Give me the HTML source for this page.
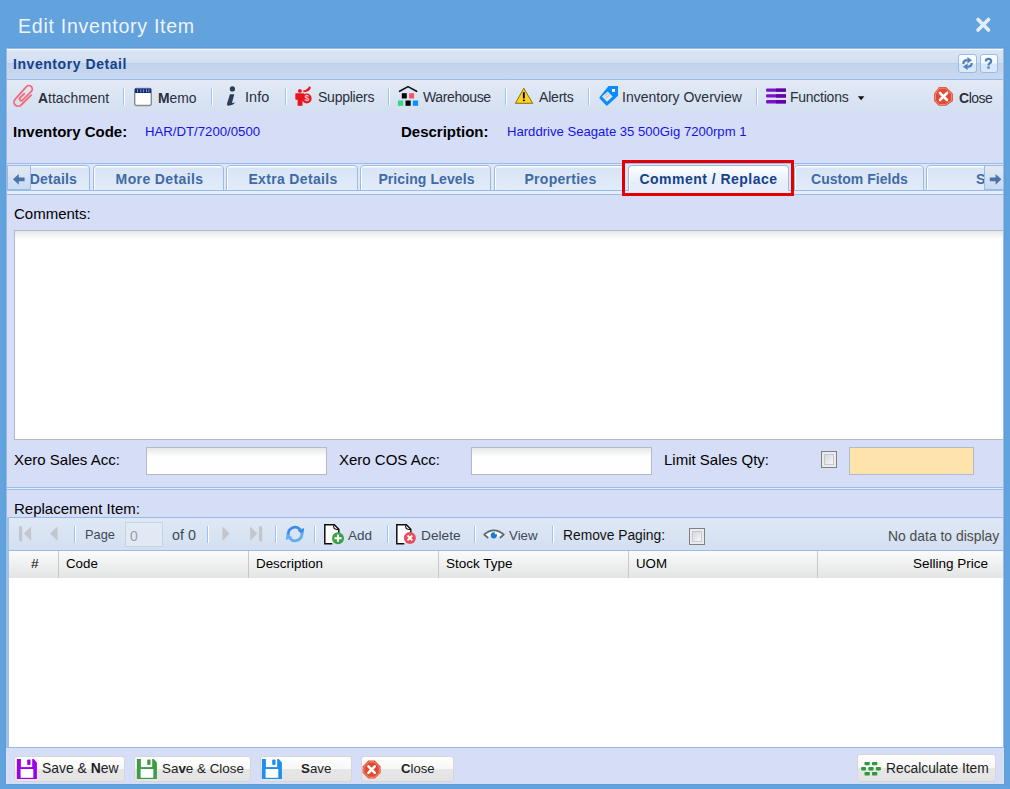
<!DOCTYPE html>
<html><head><meta charset="utf-8">
<style>
*{box-sizing:border-box;margin:0;padding:0}
html,body{width:1010px;height:789px;overflow:hidden;background:#62a2dd;font-family:"Liberation Sans",sans-serif;}
.a{position:absolute}
.t{position:absolute;white-space:nowrap;line-height:1}
#panel{position:absolute;left:6px;top:48px;width:998px;height:736px;background:#d6ddf6;border-left:1px solid #99bbe8;border-top:1px solid #99bbe8}

.tab{position:absolute;top:0;width:131px;height:26px;border:1px solid #99bbe8;border-radius:4px 4px 0 0;background:linear-gradient(#ffffff 0,#ffffff 1px,#d8e5f6 2px,#e2ecfa 25px);color:#416aa3;font-weight:bold;text-align:center;overflow:hidden;box-shadow:inset 1px 0 0 #fff}
.tab span{display:inline-block;line-height:1;margin-top:6px;white-space:nowrap}
.tab.act{color:#15428b;background:linear-gradient(#ffffff 0,#f7fafe 5px,#e4edf9 18px,#e6eefb 26px);height:26px;border-bottom:none}

.btn{position:absolute;top:756px;height:26px;border:1px solid #d6d6d6;border-radius:3px;background:linear-gradient(#fefefe 0,#f8f8f8 48%,#e6e6e6 52%,#e4e4e4 100%)}
.sep{position:absolute;width:2px;height:17px;border-left:1px solid #9ec3f3;background:#fff}
</style></head><body>
<!-- title -->
<div class="t" style="left:18px;top:17px;font-size:19.6px;letter-spacing:0.71px;color:#eef4fb">Edit Inventory Item</div>
<svg class="a" style="left:970px;top:12px" width="26" height="26"><path d="M8 7.5 L18.5 18 M18.5 7.5 L8 18" stroke="#e3eef8" stroke-width="3.6" stroke-linecap="round"/></svg>

<div class="a" style="left:5px;top:47px;width:1000px;height:738px;border:1px solid #5a9edb"></div>
<div id="panel"></div>
<div class="a" style="left:1003px;top:48px;width:1px;height:700px;background:#9dbde9"></div>
<div class="a" style="left:6px;top:748px;width:1px;height:36px;background:#dde1f7"></div>
<!-- panel header -->
<div class="a" style="left:7px;top:49px;width:996px;height:30px;background:linear-gradient(#dbe6f4 0,#d3dff1 13px,#b9ceeb 13px,#b9ceeb 14px,#c1d3ed 14px,#c8d8ef 29px);border-top:1px solid #f6f9fd"></div>
<div class="a" style="left:7px;top:79px;width:996px;height:1px;background:#99bbe8"></div>
<div class="t" style="left:13px;top:57px;font-size:14px;letter-spacing:0.56px;font-weight:bold;color:#15428b">Inventory Detail</div>


<div class="a" style="left:958px;top:54px;width:19px;height:19px;border:1px solid #99bbe8;border-radius:3px;background:linear-gradient(#fbfdff 0,#f3f8fe 8px,#d6e6f9 9px,#dceaf9 19px)"></div>
<svg class="a" style="left:958px;top:54px" width="19" height="19"><g fill="#4f80bb"><path d="M5.3 10 Q5.3 6.2 9.6 6.2" fill="none" stroke="#4f80bb" stroke-width="2.2"/><path d="M9.4 3 L14 6.2 L9.4 9.4 Z"/><path d="M13.7 9 Q13.7 12.8 9.4 12.8" fill="none" stroke="#4f80bb" stroke-width="2.2"/><path d="M9.6 9.6 L5 12.8 L9.6 16 Z"/></g></svg>
<div class="a" style="left:980px;top:54px;width:18px;height:19px;border:1px solid #99bbe8;border-radius:3px;background:linear-gradient(#fbfdff 0,#f3f8fe 8px,#d6e6f9 9px,#dceaf9 19px)"></div>
<svg class="a" style="left:980px;top:54px" width="18" height="19"><path d="M5.9 7.4 Q5.9 4.9 8.5 4.9 Q11.1 4.9 11.1 7.3 Q11.1 8.7 9.4 9.6 Q8.5 10.2 8.5 11.4" fill="none" stroke="#4f80bb" stroke-width="2.3"/><rect x="7.3" y="12.5" width="2.4" height="2.2" fill="#4f80bb"/></svg>

<!-- toolbar -->
<div class="a" style="left:7px;top:80px;width:996px;height:33px;background:linear-gradient(#e3eaf6,#d3dff1)"></div>


<!-- toolbar items -->
<div class="a" style="left:7px;top:80px;width:996px;height:34px;">
</div>
<svg class="a" style="left:10px;top:84px" width="26" height="26"><g transform="translate(0.8,-1) rotate(-45)" fill="none" stroke="#f26b78" stroke-width="1.8" stroke-linecap="round"><path d="M5.8 22.9 L-8.2 22.9 A4.2 4.2 0 0 1 -8.2 14.5 L8.5 13.6 A3.45 3.45 0 0 1 8.5 20.5 L-3.8 20.5 A1.75 1.75 0 0 1 -3.8 17 L2.1 17"/></g></svg>
<div class="t" style="left:38px;top:92px;font-size:13.9px;color:#2b2f3a"><b>A</b>ttachment</div>
<svg class="a" style="left:130px;top:84px" width="26" height="26"><rect x="4.7" y="4.5" width="16.6" height="17" rx="2" fill="#fff" stroke="#8a8c90" stroke-width="1.4"/><rect x="5" y="4.6" width="16" height="4.4" fill="#0d2c7c"/><g fill="#8fa8d0"><rect x="7" y="5.3" width="0.9" height="3"/><rect x="10.4" y="5.3" width="0.9" height="3"/><rect x="13.2" y="5.3" width="0.9" height="3"/><rect x="16" y="5.3" width="0.9" height="3"/><rect x="18.4" y="5.3" width="0.9" height="3"/></g></svg>
<div class="t" style="left:158px;top:92px;font-size:13.9px;color:#2b2f3a"><b>M</b>emo</div>
<svg class="a" style="left:220px;top:84px" width="20" height="24"><circle cx="12.4" cy="4.9" r="2.6" fill="#2c3e52"/><path d="M9.9 10.2 L14.3 10.2 L12.1 18.6 Q12 19.2 12.6 19.1 L15.2 18.6 Q13 21.6 8.6 21.7 Q6.6 21.7 7 19.8 Z" fill="#2c3e52"/></svg>
<div class="t" style="left:245px;top:90px;font-size:14.4px;letter-spacing:0.1px;color:#2b2f3a">Info</div>
<svg class="a" style="left:290px;top:84px" width="26" height="26"><g fill="#e8141e"><circle cx="9.9" cy="6.9" r="1.9"/><rect x="5.3" y="9.3" width="8.8" height="6.4" rx="0.8"/><rect x="7.6" y="14" width="4.9" height="7.8"/><circle cx="16.7" cy="14.5" r="4.9"/><path d="M13 6.6 Q17.2 6 19.2 2.2 L20.8 3.2 Q20.5 7.8 13.6 8.3 Z"/></g><text x="16.9" y="17.4" font-size="8.5" font-weight="bold" text-anchor="middle" fill="#ffc8cc" font-family="Liberation Sans">$</text></svg>
<div class="t" style="left:318px;top:90px;font-size:14px;letter-spacing:-0.24px;color:#2b2f3a">Suppliers</div>
<svg class="a" style="left:394px;top:82px" width="28" height="28"><path d="M5.6 9.3 L14 4.6 L22.6 9.3" fill="none" stroke="#111" stroke-width="1.6" stroke-linecap="round" stroke-linejoin="round"/><rect x="7.8" y="11.2" width="5" height="5.3" fill="#000"/><rect x="15.1" y="11.2" width="5" height="5.3" fill="#ff5262"/><rect x="3.9" y="18.5" width="5.3" height="5.3" fill="#33d882"/><rect x="11.5" y="18.5" width="5.2" height="5.3" fill="#000"/><rect x="18.8" y="18.5" width="5.3" height="5.3" fill="#0a92ff"/></svg>
<div class="t" style="left:423px;top:90px;font-size:14px;letter-spacing:-0.37px;color:#2b2f3a">Warehouse</div>
<svg class="a" style="left:510px;top:84px" width="26" height="26"><path d="M13.8 4.3 L22.7 19.3 L5.4 19.3 Z" fill="#ffd31f" stroke="#7a6200" stroke-width="0.9" stroke-linejoin="round"/><rect x="12.9" y="8.2" width="1.9" height="6.2" fill="#000"/><ellipse cx="13.85" cy="16.4" rx="1.1" ry="0.8" fill="#000"/></svg>
<div class="t" style="left:539px;top:90px;font-size:14px;letter-spacing:-0.2px;color:#2b2f3a">Alerts</div>
<svg class="a" style="left:595px;top:82px" width="28" height="28"><path d="M13.5 4 L23 4 L23 13.7 L12.7 23.3 Q11.8 24 11 23.3 L4.6 16.4 Q4 15.6 4.7 14.9 Z" fill="#0a8cff"/><rect x="17" y="7" width="3" height="2.8" fill="#fff"/><path d="M7 14.6 L12.6 9.6 L17.6 14.6 L12 19.8 Z" fill="#e4e6e8"/><path d="M9.5 14.5 L13 11.4 M11 16 L14.5 12.9" stroke="#b0b0b0" stroke-width="0.8"/></svg>
<div class="t" style="left:622px;top:90px;font-size:14px;color:#2b2f3a">Inventory Overview</div>
<svg class="a" style="left:762px;top:84px" width="26" height="26"><g><rect x="4.1" y="4.6" width="19.9" height="3.1" rx="1" fill="#7c12c4"/><rect x="4.1" y="10.3" width="19.9" height="3.3" rx="1" fill="#7c12c4"/><rect x="4.1" y="16.1" width="19.9" height="3.3" rx="1" fill="#7c12c4"/><rect x="14" y="4.6" width="10" height="3.1" fill="#6400a8"/><rect x="14" y="10.3" width="10" height="3.3" fill="#6400a8"/><rect x="14" y="16.1" width="10" height="3.3" fill="#6400a8"/></g></svg>
<div class="t" style="left:790px;top:90px;font-size:14px;letter-spacing:-0.25px;color:#2b2f3a">Functions</div>
<svg class="a" style="left:856px;top:95px" width="10" height="7"><path d="M1.8 1.2 L8.4 1.2 L5.1 5.3 Z" fill="#111"/></svg>
<svg class="a" style="left:928px;top:82px" width="30" height="30"><path d="M10.9 4.9 L18.1 4.9 L24.9 11.7 L24.9 18.9 L18.1 23.8 L10.9 23.8 L6.1 18.9 L6.1 11.7 Z" fill="#e24a33"/><path d="M11.3 6.2 L17.7 6.2 L23.6 12.1 L23.6 18.5 L17.7 22.5 L11.3 22.5 L7.4 18.5 L7.4 12.1 Z" fill="none" stroke="#f3907e" stroke-width="1"/><path d="M12 11 L19 18 M19 11 L12 18" stroke="#fff" stroke-width="2.6" stroke-linecap="round"/></svg>
<div class="t" style="left:959px;top:91px;font-size:14px;letter-spacing:-0.5px;color:#2b2f3a"><b>C</b>lose</div>

<!-- inventory code row -->
<div class="t" style="left:13px;top:124px;font-size:15px;font-weight:bold;color:#000">Inventory Code:</div>
<div class="t" style="left:145px;top:125px;font-size:13.2px;color:#1414e6">HAR/DT/7200/0500</div>
<div class="t" style="left:401px;top:124px;font-size:15px;font-weight:bold;color:#000">Description:</div>
<div class="t" style="left:507px;top:125px;font-size:13.1px;color:#1414e6">Harddrive Seagate 35 500Gig 7200rpm 1</div>

<!-- tabs strip -->

<div class="a" style="left:7px;top:163px;width:996px;height:1px;background:#99bbe8"></div>
<div class="a" style="left:7px;top:164px;width:996px;height:27px;background:#dfe7f7"></div>
<div class="a" style="left:7px;top:190px;width:996px;height:5px;background:#e6eefb;border-top:1px solid #99bbe8;border-bottom:1px solid #99bbe8"></div>
<div class="a" style="left:7px;top:165px;width:996px;height:26px;overflow:hidden">
  <div class="tab" style="left:-48px"><span style="font-size:14px;letter-spacing:0.18px;position:absolute;right:12px;top:0">Details</span></div>
  <div class="tab" style="left:86px"><span style="font-size:14px;letter-spacing:0.38px;padding-left:2px">More Details</span></div>
  <div class="tab" style="left:219px;width:132px"><span style="font-size:14px;letter-spacing:0.34px;padding-left:2px">Extra Details</span></div>
  <div class="tab" style="left:353px"><span style="font-size:14px;letter-spacing:0.09px;padding-left:2px">Pricing Levels</span></div>
  <div class="tab" style="left:487px"><span style="font-size:14px;letter-spacing:0.27px;padding-left:2px">Properties</span></div>
  <div class="tab act" style="left:621px;width:161px"><span style="font-size:14px;letter-spacing:0.48px">Comment / Replace</span></div>
  <div class="tab" style="left:787px;width:130px"><span style="font-size:14px;letter-spacing:0.03px;padding-left:1px">Custom Fields</span></div>
  <div class="tab" style="left:919px;width:130px"><span style="font-size:14px;letter-spacing:0.3px;position:absolute;left:49px;top:0">Stock</span></div>
  <div class="a" style="left:0;top:0;width:24px;height:25px;border:1px solid #99bbe8;border-right-color:#99bbe8;background:linear-gradient(#e3e9f3,#c9daf2)"></div>
  <svg class="a" style="left:5px;top:9px" width="14" height="12"><path d="M1 5.3 L6.8 0 L6.8 3.4 L12.6 3.4 L12.6 7.2 L6.8 7.2 L6.8 10.7 Z" fill="#4a74ab"/></svg>
  <div class="a" style="left:977px;top:0;width:19px;height:25px;border:1px solid #99bbe8;border-right:none;background:linear-gradient(#e3e9f3,#c9daf2)"></div>
  <svg class="a" style="left:982px;top:9px" width="14" height="12"><path d="M12.4 5.3 L6.6 0 L6.6 3.4 L0.8 3.4 L0.8 7.2 L6.6 7.2 L6.6 10.7 Z" fill="#4a74ab"/></svg>
</div>
<div class="a" style="left:622px;top:160px;width:172px;height:36px;border:3px solid #e40000"></div>


<!-- comments -->
<div class="t" style="left:14px;top:206px;font-size:15px;color:#000">Comments:</div>
<div class="a" style="left:14px;top:230px;width:989px;height:210px;background:linear-gradient(#e4e7e8,#f4f5f5 5px,#fff 9px);border:1px solid #b5b8c8;border-right:none"></div>

<!-- xero row -->
<div class="t" style="left:14px;top:452px;font-size:15px;color:#000">Xero Sales Acc:</div>
<div class="a" style="left:146px;top:447px;width:181px;height:28px;background:linear-gradient(#e4e7e8,#f4f5f5 5px,#fff 9px);border:1px solid #b5b8c8"></div>
<div class="t" style="left:339px;top:452px;font-size:15px;color:#000">Xero COS Acc:</div>
<div class="a" style="left:471px;top:447px;width:181px;height:28px;background:linear-gradient(#e4e7e8,#f4f5f5 5px,#fff 9px);border:1px solid #b5b8c8"></div>
<div class="t" style="left:664px;top:452px;font-size:15px;color:#000">Limit Sales Qty:</div>
<div class="a" style="left:821px;top:451px;width:16px;height:17px;border:1px solid #808080;background:#ebebeb"><div style="position:absolute;left:2px;top:2px;width:10px;height:11px;border:1px solid #c4c8d0;background:linear-gradient(135deg,#d4d8de,#f6f6f6)"></div></div>
<div class="a" style="left:849px;top:447px;width:125px;height:28px;background:#ffe3ad;border:1px solid #b5b8c8"></div>

<!-- separator -->
<div class="a" style="left:7px;top:487px;width:996px;height:3px;border-top:1px solid #99bbe8;border-bottom:1px solid #99bbe8;background:#e6edfa"></div>

<div class="t" style="left:14px;top:501px;font-size:15px;color:#000">Replacement Item:</div>

<!-- grid toolbar -->
<div class="a" style="left:8px;top:517px;width:995px;height:34px;background:linear-gradient(#dfe8f5,#d3e0f1);border-top:1px solid #99bbe8;border-bottom:1px solid #99bbe8"></div>
<div class="a" style="left:6px;top:517px;width:3px;height:231px;background:#a2c0e9"></div>
<!-- grid header -->
<div class="a" style="left:9px;top:551px;width:994px;height:27px;background:linear-gradient(#fbfbfb,#e3e4e5)"></div>
<!-- grid body -->
<div class="a" style="left:9px;top:578px;width:994px;height:169px;background:#fff"></div>
<div class="a" style="left:7px;top:747px;width:996px;height:1px;background:#99bbe8"></div>


<!-- grid toolbar items -->
<svg class="a" style="left:14px;top:522px" width="22" height="22"><rect x="4.9" y="4.3" width="3.3" height="14.9" rx="0.8" fill="#c3c6cc"/><path d="M10 11.6 L17.1 4.4 L17.1 18.8 Z" fill="#c3c6cc"/></svg>
<svg class="a" style="left:44px;top:522px" width="20" height="22"><path d="M6.1 11.6 L13.5 4.4 L13.5 18.8 Z" fill="#c3c6cc"/></svg>
<div class="t" style="left:85px;top:529px;font-size:12.8px;color:#404858">Page</div>
<div class="a" style="left:125px;top:522px;width:38px;height:25px;border:1px solid #c7d2e2;background:#e1e9f5"></div>
<div class="t" style="left:130px;top:529px;font-size:14px;color:#9aa0a8">0</div>
<div class="t" style="left:172px;top:528px;font-size:14.3px;color:#404858">of 0</div>
<svg class="a" style="left:216px;top:522px" width="20" height="22"><path d="M13.8 11.6 L6.4 4.4 L6.4 18.8 Z" fill="#c3c6cc"/></svg>
<svg class="a" style="left:244px;top:522px" width="22" height="22"><path d="M13.3 11.6 L6.2 4.4 L6.2 18.8 Z" fill="#c3c6cc"/><rect x="14.9" y="4.3" width="3.3" height="14.9" rx="0.8" fill="#c3c6cc"/></svg>
<svg class="a" style="left:283px;top:522px" width="24" height="24"><path d="M5.4 13.5 A6.8 6.8 0 0 1 17.2 7.6" fill="none" stroke="#3a8de6" stroke-width="2.8"/><path d="M14.6 8.6 L21.2 6 L20.2 13 Z" fill="#3a8de6"/><path d="M18.6 10.5 A6.8 6.8 0 0 1 6.8 16.4" fill="none" stroke="#62aef0" stroke-width="2.8"/><path d="M9.4 15.4 L2.8 18 L3.8 11 Z" fill="#62aef0"/></svg>
<svg class="a" style="left:320px;top:521px" width="26" height="26"><g transform="translate(0.8,0.8)"><path d="M4 3 L13.6 3 L18 7.4 L18 13 L12 22 L4 22 Z" fill="#fff"/><path d="M11.5 22 L4 22 L4 3 L13.6 3 L18 7.4 L18 12.5" fill="none" stroke="#111" stroke-width="1.5" stroke-linejoin="miter"/><path d="M13.6 3.2 Q12.2 4.4 13.2 6.4 Q14.6 8.2 17.8 7.4" fill="none" stroke="#111" stroke-width="1.1"/></g><circle cx="18" cy="17.2" r="6" fill="#3aa14a"/><path d="M18 13.6 L18 20.8 M14.4 17.2 L21.6 17.2" stroke="#fff" stroke-width="2"/></svg>
<div class="t" style="left:348px;top:529px;font-size:13.5px;color:#404858">Add</div>
<svg class="a" style="left:392px;top:521px" width="26" height="26"><g transform="translate(0.8,0.8)"><path d="M4 3 L13.6 3 L18 7.4 L18 13 L12 22 L4 22 Z" fill="#fff"/><path d="M11.5 22 L4 22 L4 3 L13.6 3 L18 7.4 L18 12.5" fill="none" stroke="#111" stroke-width="1.5" stroke-linejoin="miter"/><path d="M13.6 3.2 Q12.2 4.4 13.2 6.4 Q14.6 8.2 17.8 7.4" fill="none" stroke="#111" stroke-width="1.1"/></g><circle cx="17.9" cy="16.9" r="6" fill="#ea4c5c"/><path d="M15.5 14.5 L20.3 19.3 M20.3 14.5 L15.5 19.3" stroke="#fff" stroke-width="1.8"/></svg>
<div class="t" style="left:421px;top:529px;font-size:13.7px;color:#404858">Delete</div>
<svg class="a" style="left:478px;top:522px" width="32" height="26"><path d="M7 12.6 Q15.8 5.6 25 12.6 Q15.8 17.6 7 12.6 Z" fill="#fff"/><path d="M9.6 15.6 L6.2 12.5 Q15.8 4.4 25.8 12.5 L22.4 15.6" fill="none" stroke="#5d6670" stroke-width="1.7" stroke-linejoin="round" stroke-linecap="round"/><circle cx="15.8" cy="13.3" r="3.1" fill="#1a78d8"/><circle cx="18" cy="11" r="1.3" fill="#fff"/></svg>
<div class="t" style="left:509px;top:529px;font-size:13.3px;color:#404858">View</div>
<div class="t" style="left:563px;top:529px;font-size:13.8px;color:#111">Remove Paging:</div>
<div class="a" style="left:689px;top:528px;width:16px;height:17px;border:1px solid #808080;background:#ebebeb"><div style="position:absolute;left:2px;top:2px;width:10px;height:11px;border:1px solid #c4c8d0;background:linear-gradient(135deg,#d4d8de,#f6f6f6)"></div></div>
<div class="t" style="left:888px;top:530px;font-size:13.9px;color:#4c4c4c">No data to display</div>

<!-- grid header cols -->
<div class="a" style="left:58px;top:551px;width:1px;height:27px;background:#c8c8c8"></div>
<div class="a" style="left:248px;top:551px;width:1px;height:27px;background:#c8c8c8"></div>
<div class="a" style="left:438px;top:551px;width:1px;height:27px;background:#c8c8c8"></div>
<div class="a" style="left:628px;top:551px;width:1px;height:27px;background:#c8c8c8"></div>
<div class="a" style="left:817px;top:551px;width:1px;height:27px;background:#c8c8c8"></div>
<div class="t" style="left:31px;top:557px;font-size:13.7px;color:#000">#</div>
<div class="t" style="left:66px;top:557px;font-size:13.3px;color:#000">Code</div>
<div class="t" style="left:256px;top:557px;font-size:13.4px;color:#000">Description</div>
<div class="t" style="left:446px;top:557px;font-size:13.5px;color:#000">Stock Type</div>
<div class="t" style="left:636px;top:557px;font-size:13.3px;color:#000">UOM</div>
<div class="t" style="left:913px;top:557px;font-size:13.5px;color:#000">Selling Price</div>

<!-- bottom buttons -->
<div class="a" style="left:1003px;top:748px;width:1px;height:36px;background:#dde1f7"></div>
<div class="btn" style="left:14px;width:111px"></div>
<svg class="a" style="left:12px;top:754px" width="30" height="30"><path d="M4.9 4.9 L21.7 4.9 L24.9 8.4 L24.9 24.9 L4.9 24.9 Z" fill="#9e00ec"/><rect x="8.9" y="4.9" width="11.3" height="8.2" fill="#fff"/><rect x="15.2" y="5.5" width="3.3" height="5.4" rx="1" fill="#9e00ec"/><rect x="8.6" y="15" width="12.7" height="8.8" fill="#fff"/></svg>
<div class="t" style="left:42px;top:762px;font-size:13.9px;color:#222">Save &amp; <b>N</b>ew</div>
<div class="btn" style="left:134px;width:117px"></div>
<svg class="a" style="left:132px;top:754px" width="30" height="30"><path d="M4.9 4.9 L21.7 4.9 L24.9 8.4 L24.9 24.9 L4.9 24.9 Z" fill="#3e9b47"/><rect x="8.9" y="4.9" width="11.3" height="8.2" fill="#fff"/><rect x="15.2" y="5.5" width="3.3" height="5.4" rx="1" fill="#3e9b47"/><rect x="8.6" y="15" width="12.7" height="8.8" fill="#fff"/></svg>
<div class="t" style="left:162px;top:762px;font-size:13.4px;color:#222">Sa<b>v</b>e &amp; Close</div>
<div class="btn" style="left:260px;width:92px"></div>
<svg class="a" style="left:257px;top:754px" width="30" height="30"><path d="M4.9 4.9 L21.7 4.9 L24.9 8.4 L24.9 24.9 L4.9 24.9 Z" fill="#1e8ff0"/><rect x="8.9" y="4.9" width="11.3" height="8.2" fill="#fff"/><rect x="15.2" y="5.5" width="3.3" height="5.4" rx="1" fill="#1e8ff0"/><rect x="8.6" y="15" width="12.7" height="8.8" fill="#fff"/></svg>
<div class="t" style="left:301px;top:762px;font-size:13.3px;color:#222"><b>S</b>ave</div>
<div class="btn" style="left:361px;width:93px"></div>
<svg class="a" style="left:358px;top:756px" width="28" height="28"><path d="M10.4 4.6 L16.8 4.6 L22.6 10.4 L22.6 16.8 L16.8 22.6 L10.4 22.6 L4.6 16.8 L4.6 10.4 Z" fill="#e24a33"/><path d="M10.8 5.9 L16.4 5.9 L21.3 10.8 L21.3 16.4 L16.4 21.3 L10.8 21.3 L5.9 16.4 L5.9 10.8 Z" fill="none" stroke="#f3907e" stroke-width="1"/><path d="M10.4 10.4 L16.8 16.8 M16.8 10.4 L10.4 16.8" stroke="#fff" stroke-width="2.5" stroke-linecap="round"/></svg>
<div class="t" style="left:401px;top:762px;font-size:13.1px;color:#222"><b>C</b>lose</div>
<div class="btn" style="left:857px;top:754px;width:139px;height:28px"></div>
<svg class="a" style="left:856px;top:752px" width="30" height="30"><g fill="#2e9a3c"><rect x="8.5" y="9.9" width="5.3" height="3.4" rx="0.8"/><rect x="16" y="9.9" width="5.3" height="3.4" rx="0.8"/><rect x="5.1" y="15" width="4.9" height="3.4" rx="0.8"/><rect x="12.4" y="15" width="5.2" height="3.4" rx="0.8"/><rect x="19.9" y="15" width="5" height="3.4" rx="0.8"/><rect x="8.5" y="20.1" width="5.3" height="3.4" rx="0.8"/><rect x="16" y="20.1" width="5.3" height="3.4" rx="0.8"/></g></svg>
<div class="t" style="left:886px;top:762px;font-size:13.8px;color:#222">Recalculate Item</div>

<div class="sep" style="left:123px;top:88px"></div><div class="sep" style="left:211px;top:88px"></div><div class="sep" style="left:285px;top:88px"></div><div class="sep" style="left:388px;top:88px"></div><div class="sep" style="left:505px;top:88px"></div><div class="sep" style="left:588px;top:88px"></div><div class="sep" style="left:756px;top:88px"></div><div class="sep" style="left:74px;top:526px"></div><div class="sep" style="left:207px;top:526px"></div><div class="sep" style="left:275px;top:526px"></div><div class="sep" style="left:314px;top:526px"></div><div class="sep" style="left:387px;top:526px"></div><div class="sep" style="left:474px;top:526px"></div><div class="sep" style="left:552px;top:526px"></div>
</body></html>
